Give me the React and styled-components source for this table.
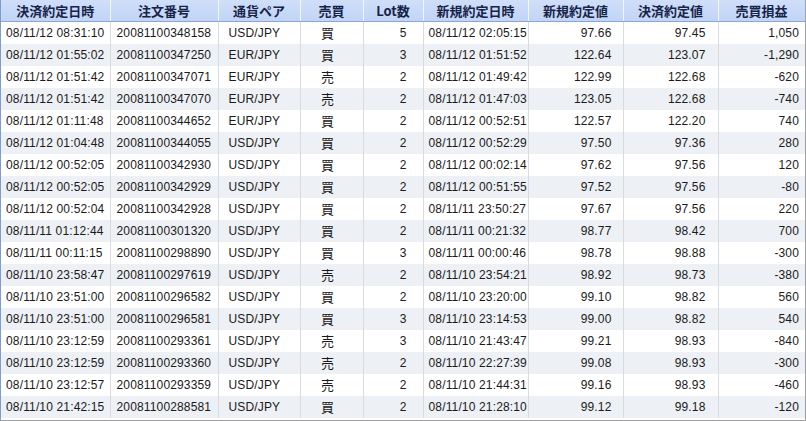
import React from "react";
import styled, { createGlobalStyle } from "styled-components";

const Global = createGlobalStyle`
  html, body { margin: 0; padding: 0; background: #ffffff; }
  body { font-family: "Liberation Sans", Arial, "Noto Sans CJK JP", sans-serif; }
`;

const Frame = styled.div`
  width: 806px;
  height: 421px;
  box-sizing: border-box;
  border-left: 1px solid #7f9dc9;
  border-right: 1px solid #a0a0a0;
  border-bottom: 1px solid #a0a0a0;
  overflow: hidden;
  background: #ffffff;
`;

const Table = styled.table`
  width: 100%;
  border-collapse: collapse;
  table-layout: fixed;
`;

const Th = styled.th`
  height: 21px;
  padding: 0;
  background: linear-gradient(#cfdef9, #c1d4f5);
  border-right: 1px solid #f2f6fe;
  border-left: 1px solid #9db5e0;
  border-bottom: 1px solid #8aa6d8;
  color: #16244a;
  font-family: "Noto Sans CJK JP", "Liberation Sans", sans-serif;
  font-weight: bold;
  font-size: 13px;
  line-height: 20px;
  text-align: center;
  white-space: nowrap;
  &:first-child { border-left: none; }
`;

const Row = styled.tr`
  background: ${(p) => (p.$alt ? "#edf0f4" : "#ffffff")};
`;

const Td = styled.td`
  height: 22px;
  padding: 0 ${(p) => p.$pr ?? 5}px 0 ${(p) => p.$pl ?? 5}px;
  border-right: 1px solid #d8dbe0;
  font-size: 12px;
  color: #1a1a1a;
  text-align: ${(p) => p.$align || "left"};
  white-space: nowrap;
  overflow: hidden;
  letter-spacing: 0.15px;
  &:last-child { border-right: none; }
`;

const Kanji = styled.span`
  font-family: "Noto Sans CJK JP", sans-serif;
  font-size: 13px;
  line-height: 16px;
`;

const widths = [109, 108, 82, 63, 60, 105, 95, 95, 87];
const heads = ["決済約定日時", "注文番号", "通貨ペア", "売買", "Lot数", "新規約定日時", "新規約定値", "決済約定値", "売買損益"];

const rows = [
  ["08/11/12 08:31:10", "20081100348158", "USD/JPY", "買", "5", "08/11/12 02:05:15", "97.66", "97.45", "1,050"],
  ["08/11/12 01:55:02", "20081100347250", "EUR/JPY", "買", "3", "08/11/12 01:51:52", "122.64", "123.07", "-1,290"],
  ["08/11/12 01:51:42", "20081100347071", "EUR/JPY", "売", "2", "08/11/12 01:49:42", "122.99", "122.68", "-620"],
  ["08/11/12 01:51:42", "20081100347070", "EUR/JPY", "売", "2", "08/11/12 01:47:03", "123.05", "122.68", "-740"],
  ["08/11/12 01:11:48", "20081100344652", "EUR/JPY", "買", "2", "08/11/12 00:52:51", "122.57", "122.20", "740"],
  ["08/11/12 01:04:48", "20081100344055", "USD/JPY", "買", "2", "08/11/12 00:52:29", "97.50", "97.36", "280"],
  ["08/11/12 00:52:05", "20081100342930", "USD/JPY", "買", "2", "08/11/12 00:02:14", "97.62", "97.56", "120"],
  ["08/11/12 00:52:05", "20081100342929", "USD/JPY", "買", "2", "08/11/12 00:51:55", "97.52", "97.56", "-80"],
  ["08/11/12 00:52:04", "20081100342928", "USD/JPY", "買", "2", "08/11/11 23:50:27", "97.67", "97.56", "220"],
  ["08/11/11 01:12:44", "20081100301320", "USD/JPY", "買", "2", "08/11/11 00:21:32", "98.77", "98.42", "700"],
  ["08/11/11 00:11:15", "20081100298890", "USD/JPY", "買", "3", "08/11/11 00:00:46", "98.78", "98.88", "-300"],
  ["08/11/10 23:58:47", "20081100297619", "USD/JPY", "売", "2", "08/11/10 23:54:21", "98.92", "98.73", "-380"],
  ["08/11/10 23:51:00", "20081100296582", "USD/JPY", "買", "2", "08/11/10 23:20:00", "99.10", "98.82", "560"],
  ["08/11/10 23:51:00", "20081100296581", "USD/JPY", "買", "3", "08/11/10 23:14:53", "99.00", "98.82", "540"],
  ["08/11/10 23:12:59", "20081100293361", "USD/JPY", "売", "3", "08/11/10 21:43:47", "99.21", "98.93", "-840"],
  ["08/11/10 23:12:59", "20081100293360", "USD/JPY", "売", "2", "08/11/10 22:27:39", "99.08", "98.93", "-300"],
  ["08/11/10 23:12:57", "20081100293359", "USD/JPY", "売", "2", "08/11/10 21:44:31", "99.16", "98.93", "-460"],
  ["08/11/10 21:42:15", "20081100288581", "USD/JPY", "買", "2", "08/11/10 21:28:10", "99.12", "99.18", "-120"],
];

const cellProps = [
  { $align: "left", $pl: 5 },
  { $align: "left", $pl: 6 },
  { $align: "left", $pl: 10 },
  { $align: "center", $pl: 0, $pr: 8 },
  { $align: "right", $pr: 16 },
  { $align: "left", $pl: 5 },
  { $align: "right", $pr: 11 },
  { $align: "right", $pr: 12 },
  { $align: "right", $pr: 6 },
];

export default function App() {
  return (
    <>
      <Global />
      <Frame>
        <Table>
          <colgroup>
            {widths.map((w, i) => (
              <col key={i} style={{ width: w }} />
            ))}
          </colgroup>
          <thead>
            <tr>
              {heads.map((h) => (
                <Th key={h}>{h}</Th>
              ))}
            </tr>
          </thead>
          <tbody>
            {rows.map((r, i) => (
              <Row key={i} $alt={i % 2 === 1}>
                {r.map((c, j) => (
                  <Td key={j} {...cellProps[j]}>
                    {j === 3 ? <Kanji>{c}</Kanji> : c}
                  </Td>
                ))}
              </Row>
            ))}
          </tbody>
        </Table>
      </Frame>
    </>
  );
}
